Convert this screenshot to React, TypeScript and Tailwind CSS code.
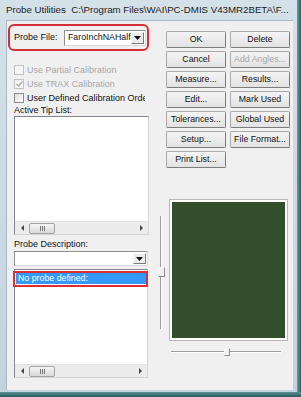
import clsx from 'clsx';

// ─── small win32-ish pieces ──────────────────────────────────────────────────

function Btn({ label, disabled }: { label: string; disabled?: boolean }) {
  return (
    <div
      className={clsx(
        'h-[17px] flex items-center justify-center rounded-[2px] border border-[#a9a9a9] border-r-[#7c7c7c] border-b-[#7c7c7c] bg-linear-to-b from-[#f4f4f4] to-[#e2e2e2] text-[8.8px] leading-none',
        disabled ? 'text-[#a6a6a6]' : 'text-[#111]'
      )}
    >
      {label}
    </div>
  );
}

function Check({ label, checked, disabled }: { label: string; checked?: boolean; disabled?: boolean }) {
  return (
    <div className="w-[138px] h-[14px] flex items-center pl-[7px] overflow-hidden">
      <div
        className={clsx(
          'w-[10px] h-[10px] shrink-0 border flex items-center justify-center',
          disabled ? 'border-[#c2c2c2] bg-[#f6f6f6]' : 'border-[#8d8d8d] bg-linear-to-br from-[#dedede] to-white'
        )}
      >
        {checked && (
          <svg width="7" height="6" viewBox="0 0 7 6">
            <path d="M0.5 3 L2.5 5 L6.5 0.5" stroke={disabled ? '#a8a8a8' : '#333'} strokeWidth="1.3" fill="none" />
          </svg>
        )}
      </div>
      <span className={clsx('ml-[3px] text-[9px] leading-none whitespace-nowrap', disabled ? 'text-[#a8a8a8]' : 'text-[#111]')}>
        {label}
      </span>
    </div>
  );
}

function DownArrow() {
  return (
    <svg width="7" height="4" viewBox="0 0 7 4">
      <path d="M0 0 H7 L3.5 4 Z" fill="#111" />
    </svg>
  );
}

function HScroll() {
  return (
    <div className="h-[13px] flex items-center bg-[#ececec] border-t border-[#e2e2e2]">
      <div className="w-[14px] flex justify-center">
        <svg width="3" height="6" viewBox="0 0 3 6">
          <path d="M3 0 L0 3 L3 6 Z" fill="#444" />
        </svg>
      </div>
      <div className="w-[26px] h-[11px] rounded-[2px] border border-[#a3a3a3] bg-linear-to-b from-[#f5f5f5] to-[#d9d9d9] flex items-center justify-center gap-[1px]">
        <div className="w-[1px] h-[5px] bg-[#777]" />
        <div className="w-[1px] h-[5px] bg-[#777]" />
        <div className="w-[1px] h-[5px] bg-[#777]" />
      </div>
      <div className="flex-1" />
      <div className="w-[14px] flex justify-center">
        <svg width="3" height="6" viewBox="0 0 3 6">
          <path d="M0 0 L3 3 L0 6 Z" fill="#444" />
        </svg>
      </div>
    </div>
  );
}

// ─── left column ─────────────────────────────────────────────────────────────

function LeftColumn() {
  return (
    <div className="w-[146px] flex flex-col">
      {/* Probe file, circled in red */}
      <div className="ml-[1px] mt-[3px] w-[141px] h-[27px] rounded-[6px] border-2 border-[#d3313a] flex items-center pl-[4px] pr-[1px]">
        <span className="text-[9px] text-[#111] leading-none">Probe File:</span>
        <div className="ml-auto w-[82px] h-[16px] flex items-center bg-white border border-[#8f8f8f] border-r-[#d8d8d8] border-b-[#d8d8d8]">
          <span className="pl-[3px] text-[8.8px] text-[#111] leading-none">FaroInchNAHalf</span>
          <div className="ml-auto mr-[1px] w-[13px] h-[12px] flex items-center justify-center bg-[#ececec] border border-[#fafafa] border-r-[#7a7a7a] border-b-[#7a7a7a]">
            <DownArrow />
          </div>
        </div>
      </div>

      <div className="mt-[12px]">
        <Check label="Use Partial Calibration" disabled />
        <Check label="Use TRAX Calibration" checked disabled />
        <Check label="User Defined Calibration Order" />
      </div>

      <div className="pl-[7px] h-[11px] flex items-center text-[9px] text-[#111] leading-none">Active Tip List:</div>

      <div className="ml-[7px] w-[135px] h-[119px] flex flex-col bg-white border border-[#828790] border-r-[#d5d5d5] border-b-[#d5d5d5]">
        <div className="flex-1" />
        <HScroll />
      </div>

      <div className="mt-[4px] pl-[7px] h-[11px] flex items-center text-[9px] text-[#111] leading-none">Probe Description:</div>

      <div className="mt-[1px] ml-[7px] w-[134px] h-[15px] flex items-center bg-white border border-[#8f8f8f] border-r-[#d8d8d8] border-b-[#d8d8d8]">
        <div className="ml-auto mr-[1px] w-[13px] h-[11px] flex items-center justify-center bg-[#ececec] border border-[#fafafa] border-r-[#7a7a7a] border-b-[#7a7a7a]">
          <DownArrow />
        </div>
      </div>

      <div className="relative mt-[3px] ml-[7px] w-[134px] h-[109px] flex flex-col bg-white border border-[#828790] border-r-[#d5d5d5] border-b-[#d5d5d5]">
        <div className="mt-[3px] mx-[1px] h-[11px] flex items-center bg-[#3399ff] pl-[2px] text-[8.8px] text-white leading-none">
          No probe defined:
        </div>
        <div className="flex-1" />
        <HScroll />
        {/* red annotation */}
        <div className="absolute left-[-2px] top-[1px] w-[135px] h-[16px] border-2 border-[#dc2f34]" />
      </div>
    </div>
  );
}

// ─── right column ────────────────────────────────────────────────────────────

const BUTTONS: [string, string | null, boolean?][] = [
  ['OK', 'Delete'],
  ['Cancel', 'Add Angles...', true],
  ['Measure...', 'Results...'],
  ['Edit...', 'Mark Used'],
  ['Tolerances...', 'Global Used'],
  ['Setup...', 'File Format...'],
  ['Print List...', null],
];

function RightColumn() {
  return (
    <div className="flex-1 flex flex-col pt-[10px]">
      <div className="pl-[13px] grid grid-cols-[60px_60px] gap-x-[4px] gap-y-[3px]">
        {BUTTONS.map(([a, b, dis]) => (
          <div key={a} className="contents">
            <Btn label={a} />
            {b ? <Btn label={b} disabled={dis} /> : <div />}
          </div>
        ))}
      </div>

      {/* preview with sliders */}
      <div className="mt-[31px] pl-[5px] flex">
        <div className="relative w-[8px] h-[142px]">
          <div className="absolute left-[2px] top-[17px] w-[2px] h-[113px] border-l border-[#9c9c9c] bg-white" />
          <div className="absolute left-[0px] top-[68px] w-[7px] h-[10px] bg-[#f0f0f0] border border-[#8a8a8a] border-l-[#f8f8f8] border-t-[#f8f8f8]" />
        </div>
        <div className="ml-[3px] w-[119px] h-[142px] border border-[#b8b8b8] bg-white p-[2px]">
          <div className="w-full h-full bg-[#334e2a]" />
        </div>
      </div>
      <div className="relative mt-[9px] ml-[18px] w-[110px] h-[8px]">
        <div className="absolute left-0 top-[1px] w-full h-[2px] border-t border-[#9c9c9c] bg-white" />
        <div className="absolute left-[53px] top-[-2px] w-[6px] h-[8px] bg-[#f0f0f0] border border-[#8a8a8a] border-l-[#f8f8f8] border-t-[#f8f8f8]" />
      </div>
    </div>
  );
}

// ─── window ──────────────────────────────────────────────────────────────────

export default function App() {
  return (
    <div className="w-[301px] h-[397px] flex flex-col bg-linear-to-b from-[#d5e1e9] to-[#c3d3de] font-['Liberation_Sans',Arial,sans-serif] overflow-hidden">
      <div className="flex-1 flex">
        <div className="flex-1 flex flex-col">
          <div className="h-[20px] pl-[6px] flex items-center text-[9.7px] text-[#1b1b1b] whitespace-nowrap">
            Probe Utilities&nbsp; C:\Program Files\WAI\PC-DMIS V43MR2BETA\F...
          </div>
          <div className="flex-1 ml-[6px] mr-[4px] mb-[2px] flex bg-[#f0f0f0] border-t border-l border-[#a9b8c2]">
            <LeftColumn />
            <RightColumn />
          </div>
        </div>
        <div className="w-[4px] bg-linear-to-r from-[#6f9a9d] to-[#2a5e61]" />
      </div>
      <div className="h-[5px] bg-linear-to-b from-[#5d8f92] to-[#275a5d]" />
    </div>
  );
}
